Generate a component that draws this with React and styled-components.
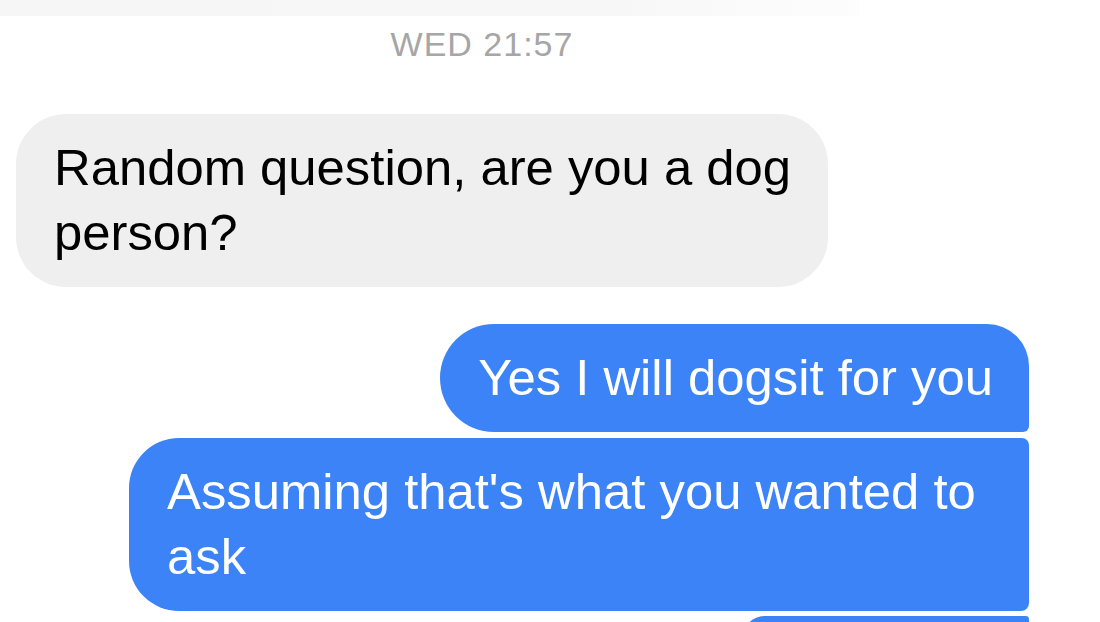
import styled, { createGlobalStyle } from 'styled-components';

const GlobalStyle = createGlobalStyle`
  * {
    box-sizing: border-box;
  }

  body {
    margin: 0;
    background: #ffffff;
    font-family: 'Liberation Sans', Arial, sans-serif;
    overflow: hidden;
  }
`;

const messages = [
  {
    id: 1,
    mine: false,
    text: 'Random question, are you a dog person?',
    width: '812px',
    corners: '50px',
  },
  {
    id: 2,
    mine: true,
    text: 'Yes I will dogsit for you',
    corners: '54px 42px 6px 54px',
    gap: '31px',
  },
  {
    id: 3,
    mine: true,
    text: "Assuming that's what you wanted to ask",
    corners: '50px 7px 8px 50px',
  },
  {
    // only the top edge of the next bubble is on screen
    id: 4,
    mine: true,
    text: '',
    width: '286px',
    corners: '50px 8px 8px 50px',
    gap: '-1px',
  },
];

const App = () => {
  return (
    <>
      <GlobalStyle />
      <Screen>
        <TopFade />
        <Stamp>WED 21:57</Stamp>
        <Thread>
          {messages.map((m) => (
            <Bubble
              key={m.id}
              $mine={m.mine}
              $width={m.width}
              $corners={m.corners}
              $gap={m.gap}
            >
              {m.text}
            </Bubble>
          ))}
        </Thread>
      </Screen>
    </>
  );
};

const Screen = styled.div`
  width: 1100px;
  height: 622px;
  display: flex;
  flex-direction: column;
  overflow: hidden;
`;

const TopFade = styled.div`
  width: 860px;
  height: 16px;
  flex-shrink: 0;
  background: linear-gradient(90deg, #f7f6f6 0%, #f8f7f7 70%, #fdfdfd 100%);
`;

const Stamp = styled.div`
  width: 964px;
  margin-top: 11px;
  text-align: center;
  font-size: 34px;
  line-height: 34px;
  letter-spacing: 1px;
  color: #a6a6a6;
`;

const Thread = styled.div`
  margin-top: 53px;
  padding: 0 71px 0 16px;
  display: flex;
  flex-direction: column;
  gap: 6px;
`;

const Bubble = styled.div`
  align-self: ${(p) => (p.$mine ? 'flex-end' : 'flex-start')};
  width: ${(p) => p.$width || 'fit-content'};
  max-width: 900px;
  min-height: 43px;
  flex-shrink: 0;
  margin-top: ${(p) => p.$gap || '0'};
  padding: 21px 36px 22px 38px;
  border-radius: ${(p) => p.$corners};
  background: ${(p) => (p.$mine ? '#3b83f6' : '#efefef')};
  color: ${(p) => (p.$mine ? '#ffffff' : '#000000')};
  font-size: 50.8px;
  line-height: 65px;
`;

export default App;
